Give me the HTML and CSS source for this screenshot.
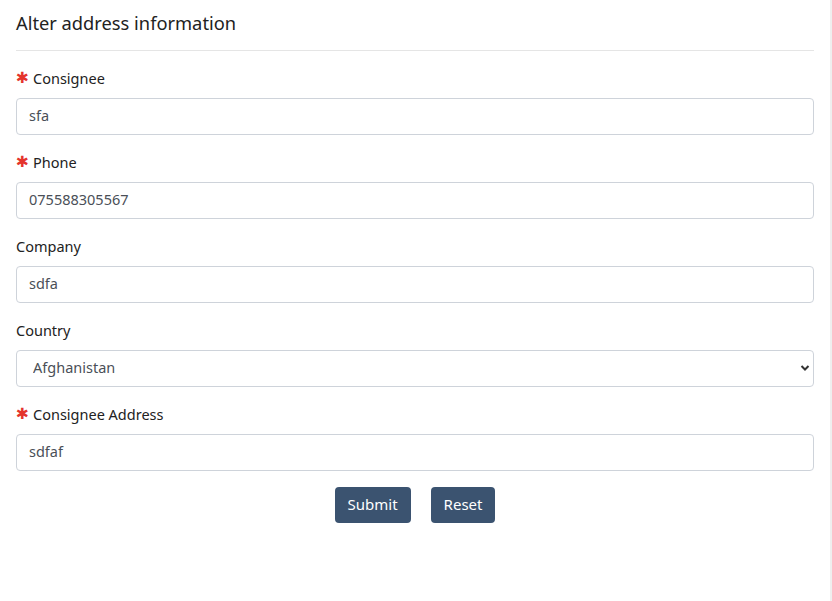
FILE: index.html
```html
<!DOCTYPE html>
<html lang="en">
<head>
<meta charset="utf-8">
<title>Alter address information</title>
<link rel="stylesheet" href="styles.css">
</head>
<body>
<div class="page">
  <h2 class="title">Alter address information</h2>
  <form class="form">
    <div class="group">
      <label class="label"><span class="req">✱</span>Consignee</label>
      <input class="control" type="text" value="sfa">
    </div>
    <div class="group">
      <label class="label"><span class="req">✱</span>Phone</label>
      <input class="control" type="text" value="075588305567">
    </div>
    <div class="group">
      <label class="label">Company</label>
      <input class="control" type="text" value="sdfa">
    </div>
    <div class="group">
      <label class="label">Country</label>
      <div class="select-wrap">
        <select class="control select">
          <option>Afghanistan</option>
        </select>
        <svg class="chev" width="10" height="8" viewBox="0 0 10 8"><path d="M1.5 2 L5 5.5 L8.5 2" fill="none" stroke="#333" stroke-width="2"/></svg>
      </div>
    </div>
    <div class="group">
      <label class="label"><span class="req">✱</span>Consignee Address</label>
      <input class="control" type="text" value="sdfaf">
    </div>
    <div class="actions">
      <button type="button" class="btn">Submit</button>
      <button type="button" class="btn">Reset</button>
    </div>
  </form>
</div>
</body>
</html>
```
FILE: styles.css
```css
html, body {
  margin: 0;
  padding: 0;
  background: #fff;
}
body {
  font-family: "Noto Sans", "Open Sans", sans-serif;
  color: #222;
}
.page {
  width: 832px;
  height: 601px;
  box-sizing: border-box;
  padding: 0 16px;
  border-right: 2px solid #efefef;
}
.title {
  margin: 0;
  box-sizing: border-box;
  height: 51px;
  padding-top: 10px;
  padding-bottom: 14px;
  font-size: 18.3px;
  font-weight: 400;
  line-height: 26px;
  color: #222;
  border-bottom: 1px solid #e5e5e5;
}
.form {
  padding-top: 15px;
}
.group {
  display: flex;
  flex-direction: column;
  margin-bottom: 15px;
}
.label {
  height: 24px;
  font-size: 14.5px;
  line-height: 22px;
  color: #222;
  margin-bottom: 8px;
  display: flex;
  align-items: center;
}
.req {
  color: #e4342c;
  font-size: 15.5px;
  margin-right: 4px;
  font-family: "DejaVu Sans", sans-serif;
}
.control {
  box-sizing: border-box;
  width: 100%;
  height: 37px;
  border: 1px solid #ced3da;
  border-radius: 4px;
  padding: 0 12px 3px;
  font-family: inherit;
  font-size: 14.5px;
  color: #4a4f57;
  background: #fff;
  outline: none;
}
.select-wrap {
  position: relative;
}
.select {
  appearance: none;
  -webkit-appearance: none;
  padding-left: 16px;
}
.chev {
  position: absolute;
  right: 4px;
  top: 14px;
}
.actions {
  display: flex;
  justify-content: center;
  gap: 20px;
  padding-top: 1px;
}
.btn {
  height: 36px;
  padding: 0 13px 2px;
  border: none;
  border-radius: 4px;
  background: #3b5370;
  color: #fff;
  font-family: inherit;
  font-size: 15px;
  cursor: pointer;
}
```
